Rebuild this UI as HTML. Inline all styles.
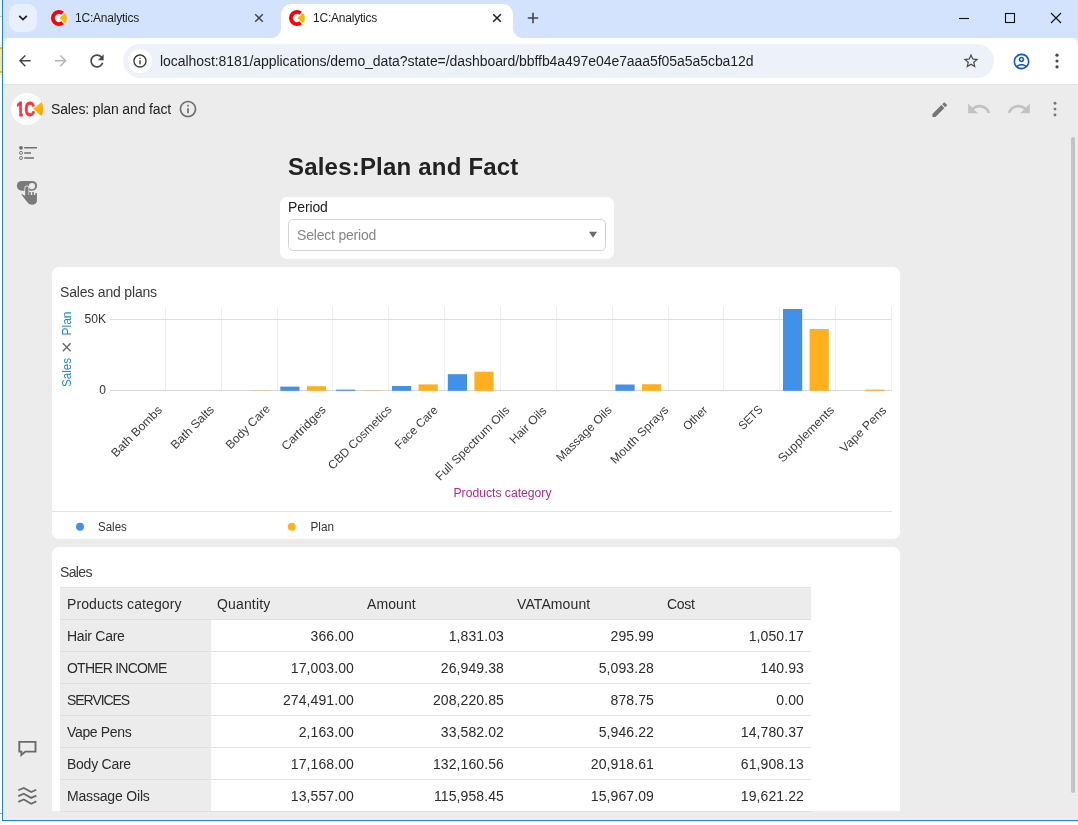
<!DOCTYPE html>
<html lang="en">
<head>
<meta charset="utf-8">
<title>1C:Analytics</title>
<style>
*{box-sizing:border-box;margin:0;padding:0}
html,body{width:1078px;height:825px;overflow:hidden;background:#fff}
body{position:relative;font-family:"Liberation Sans",sans-serif;color:#333;font-size:14px}
.abs{position:absolute}
svg{display:block;position:absolute;overflow:visible}
/* outer desktop strip */
#strip{left:0;top:0;width:2px;height:825px;background:#fff}
#strip i{position:absolute;left:0;width:2px;display:block}
/* window */
#win{left:2px;top:0;width:1076px;height:821px;background:#ececec;border-left:1px solid #1883d7;border-bottom:1px solid #1883d7;overflow:hidden}
#win .inner{position:absolute;left:-3px;top:0;width:1078px;height:825px;will-change:transform}
#cream-l{left:3px;top:85px;width:1px;height:735px;background:#f7f1ea}
#cream-b{left:3px;top:819px;width:1075px;height:1px;background:#f7f1ea}
/* tab strip */
#tabstrip{left:3px;top:0;width:1075px;height:38px;background:#d3e3fd}
#tabsearch{left:9px;top:4px;width:28px;height:28px;border-radius:9px;background:#e9f0fd}
.tabtitle{font-size:12px;color:#1f1f1f;top:11px;white-space:nowrap;line-height:14px;letter-spacing:-0.22px}
#activetab{left:281px;top:4px;width:232px;height:34px;background:#fff;border-radius:10px 10px 0 0}
#activetab:before,#activetab:after{content:"";position:absolute;bottom:0;width:10px;height:10px}
#activetab:before{left:-10px;background:radial-gradient(circle at 0 0,rgba(255,255,255,0) 9.5px,#fff 10.5px)}
#activetab:after{right:-10px;background:radial-gradient(circle at 100% 0,rgba(255,255,255,0) 9.5px,#fff 10.5px)}
/* toolbar */
#toolbar{left:3px;top:38px;width:1075px;height:46px;background:#fff;border-radius:8px 8px 0 0}
#toolbar-line{left:3px;top:84px;width:1075px;height:1px;background:#e3e3e3}
#omni{left:123px;top:44px;width:871px;height:34px;border-radius:17px;background:#edf2fa}
#omni-ic{left:128px;top:49px;width:24px;height:24px;border-radius:12px;background:#fff}
#url{left:160px;top:52px;font-size:14px;line-height:18px;color:#1f1f1f;white-space:nowrap;letter-spacing:-0.06px}
/* app */
#logo{left:11px;top:93px;width:32px;height:32px;border-radius:16px;background:#fff}
#apptitle{left:51px;top:100px;font-size:14px;line-height:18px;color:#222;white-space:nowrap;letter-spacing:-0.15px}
#h1{left:288px;top:151px;font-size:24px;line-height:32px;font-weight:bold;color:#222;white-space:nowrap;letter-spacing:0.2px}
.card{background:#fff;border-radius:7px}
#pcard{left:280px;top:197px;width:334px;height:62px}
#plabel{left:288px;top:198px;font-size:14px;line-height:18px;color:#222;letter-spacing:-0.12px}
#pselect{left:288px;top:219px;width:318px;height:32px;border:1px solid #d4d4d4;border-radius:5px;background:#fff}
#pph{left:297px;top:226px;font-size:14px;line-height:18px;color:#858585;letter-spacing:-0.2px;white-space:nowrap}
#ccard{left:52px;top:267px;width:848px;height:272px}
#tcard{left:52px;top:547px;width:848px;height:264px;border-radius:7px 7px 0 0}
.ctitle{font-size:14px;line-height:18px;color:#3a3a3a;white-space:nowrap;letter-spacing:-0.18px}
#thumb{left:1071px;top:137px;width:4px;height:656px;border-radius:2px;background:#c4c4c4}
/* table */
#tbl{left:60px;top:587px;width:751px;height:225px;border-top:1px solid #e2e2e2}
.row{position:absolute;left:0;width:751px;height:32px;border-bottom:1px solid #e0e0e0;background:#fff}
.row.h{background:#ececec}
.row b{position:absolute;left:0;top:0;width:151px;height:31px;background:#ececec;font-weight:normal}
.c{position:absolute;top:7px;font-size:14px;line-height:18px;color:#2b2b2b;white-space:nowrap;letter-spacing:-0.05px}
.n{text-align:right;width:143px;letter-spacing:0.1px}
</style>
</head>
<body>
<div id="strip" class="abs">
  <i style="top:0;height:16px;background:#f0f0f0"></i>
  <i style="top:16px;height:1px;background:#bdbdbd"></i>
  <i style="top:45px;height:1px;background:#e0e0e0"></i>
  <i style="top:47px;height:26px;background:#fde58a"></i>
  <i style="top:47px;height:2px;background:#f8c100"></i>
  <i style="top:71px;height:2px;background:#f8c100"></i>
  <i style="top:74px;height:1px;background:#e0e0e0"></i>
  <i style="top:813px;height:1px;background:#9a9a9a"></i>
</div>
<div id="win" class="abs"><div class="inner">
<div id="tabstrip" class="abs"></div>
<div id="tabsearch" class="abs"></div>
<svg style="left:17px;top:13px" width="12" height="10" viewBox="0 0 12 10"><path d="M2.2 2.8 L6 6.6 L9.8 2.8" fill="none" stroke="#1f1f1f" stroke-width="1.7"/></svg>
<!-- tab 1 (inactive) -->
<svg style="left:50.9px;top:9.9px" width="16" height="16" viewBox="0 0 16 16"><circle cx="8" cy="8" r="6.5" fill="#fff"/><path d="M13.03 1.78 A8 8 0 1 0 13.03 14.22 L10.35 11.36 A4.1 4.1 0 1 1 10.35 4.64 Z" fill="#f00"/><path d="M8.6 8 L14.04 2.75 A8 8 0 0 1 14.04 13.25 Z" fill="#ffb700"/></svg>
<div class="abs tabtitle" style="left:75px">1C:Analytics</div>
<svg style="left:254px;top:13px" width="10" height="10" viewBox="0 0 10 10"><path d="M1.2 1.2 L8.8 8.8 M8.8 1.2 L1.2 8.8" stroke="#444" stroke-width="1.5" fill="none"/></svg>
<!-- tab 2 (active) -->
<div id="activetab" class="abs"></div>
<svg style="left:288.9px;top:9.9px" width="16" height="16" viewBox="0 0 16 16"><circle cx="8" cy="8" r="6.5" fill="#fff"/><path d="M13.03 1.78 A8 8 0 1 0 13.03 14.22 L10.35 11.36 A4.1 4.1 0 1 1 10.35 4.64 Z" fill="#f00"/><path d="M8.6 8 L14.04 2.75 A8 8 0 0 1 14.04 13.25 Z" fill="#ffb700"/></svg>
<div class="abs tabtitle" style="left:313px">1C:Analytics</div>
<svg style="left:492px;top:13px" width="10" height="10" viewBox="0 0 10 10"><path d="M1.2 1.2 L8.8 8.8 M8.8 1.2 L1.2 8.8" stroke="#1f1f1f" stroke-width="1.5" fill="none"/></svg>
<svg style="left:527px;top:12px" width="12" height="12" viewBox="0 0 12 12"><path d="M6 0.8 V11.2 M0.8 6 H11.2" stroke="#444" stroke-width="1.6" fill="none"/></svg>
<!-- window controls -->
<svg style="left:958px;top:12px" width="12" height="12" viewBox="0 0 12 12"><path d="M1 6.5 H11" stroke="#111" stroke-width="1.1"/></svg>
<svg style="left:1004px;top:12px" width="12" height="12" viewBox="0 0 12 12"><rect x="1.5" y="1.5" width="9" height="9" fill="none" stroke="#111" stroke-width="1.1"/></svg>
<svg style="left:1050px;top:12px" width="12" height="12" viewBox="0 0 12 12"><path d="M1 1 L11 11 M11 1 L1 11" stroke="#111" stroke-width="1.1" fill="none"/></svg>
<!-- toolbar -->
<div id="toolbar" class="abs"></div>
<div id="toolbar-line" class="abs"></div>
<svg style="left:16.200px;top:52.200px" width="17.600" height="17.600" viewBox="0 0 24 24"><path d="M20 11H7.83l5.59-5.59L12 4l-8 8 8 8 1.41-1.41L7.83 13H20v-2z" fill="#474747"/></svg>
<svg style="left:52.200px;top:52.200px" width="17.600" height="17.600" viewBox="0 0 24 24"><path d="M12 4l-1.41 1.41L16.17 11H4v2h12.17l-5.58 5.59L12 20l8-8z" fill="#b4b4b4"/></svg>
<svg style="left:87px;top:51px" width="20" height="20" viewBox="0 0 24 24"><path d="M17.65 6.35C16.2 4.9 14.21 4 12 4c-4.42 0-7.99 3.58-7.99 8s3.57 8 7.99 8c3.73 0 6.84-2.55 7.73-6h-2.08c-.82 2.33-3.04 4-5.65 4-3.31 0-6-2.69-6-6s2.69-6 6-6c1.66 0 3.14.69 4.22 1.78L13 11h7V4l-2.35 2.35z" fill="#474747"/></svg>
<div id="omni" class="abs"></div>
<div id="omni-ic" class="abs"></div>
<svg style="left:132px;top:53px" width="16" height="16" viewBox="0 0 24 24"><path d="M11 7h2v2h-2zm0 4h2v6h-2zm1-9C6.48 2 2 6.48 2 12s4.480 10 10 10 10-4.480 10-10S17.520 2 12 2zm0 18c-4.410 0-8-3.590-8-8s3.590-8 8-8 8 3.590 8 8-3.590 8-8 8z" fill="#333"/></svg>
<div id="url" class="abs">localhost:8181/applications/demo_data?state=/dashboard/bbffb4a497e04e7aaa5f05a5a5cba12d</div>
<svg style="left:962px;top:52px" width="18" height="18" viewBox="0 0 24 24"><path d="M22 9.240l-7.190-.620L12 2 9.190 8.630 2 9.240l5.460 4.730L5.820 21 12 17.270 18.180 21l-1.630-7.030L22 9.240zM12 15.400l-3.760 2.270 1-4.280-3.320-2.880 4.380-.380L12 6.100l1.710 4.040 4.380.380-3.320 2.880 1 4.280L12 15.400z" fill="#474747"/></svg>
<svg style="left:1011.5px;top:51.5px" width="19" height="19" viewBox="0 0 24 24"><path d="M12 2C6.480 2 2 6.480 2 12s4.480 10 10 10 10-4.480 10-10S17.520 2 12 2zM7.350 18.500C8.660 17.560 10.260 17 12 17s3.340.560 4.650 1.500c-1.310.940-2.910 1.500-4.650 1.500s-3.340-.560-4.650-1.500zm10.790-1.380C16.450 15.800 14.320 15 12 15s-4.450.800-6.140 2.120C4.700 15.730 4 13.950 4 12c0-4.420 3.580-8 8-8s8 3.580 8 8c0 1.950-.700 3.730-1.860 5.120zM12 6c-1.930 0-3.500 1.570-3.500 3.500S10.070 13 12 13s3.500-1.570 3.500-3.500S13.930 6 12 6zm0 5c-.830 0-1.500-.670-1.500-1.500S11.170 8 12 8s1.500.670 1.500 1.500S12.830 11 12 11z" fill="#0b57d0"/></svg>
<svg style="left:1047px;top:51px" width="20" height="20" viewBox="0 0 24 24"><circle cx="12" cy="5" r="1.9" fill="#474747"/><circle cx="12" cy="12" r="1.9" fill="#474747"/><circle cx="12" cy="19" r="1.9" fill="#474747"/></svg>

<div id="cream-l" class="abs"></div>
<div id="cream-b" class="abs"></div>
<!-- app header -->
<div id="logo" class="abs"></div>
<svg style="left:11px;top:93px" width="32" height="32" viewBox="0 0 32 32">
  <defs><linearGradient id="lg" x1="0" y1="0" x2="1" y2="1"><stop offset="0" stop-color="#ffc800"/><stop offset="1" stop-color="#ffa000"/></linearGradient></defs>
  <text x="5.300" y="23.300" font-family="Liberation Sans, sans-serif" font-weight="bold" font-size="19.800" fill="#fa3239" stroke="#fa3239" stroke-width="0.800" textLength="18.600" lengthAdjust="spacingAndGlyphs">1C</text>
  <rect x="4" y="19.700" width="4.300" height="5.300" fill="#fff"/><rect x="11.800" y="19.700" width="2.200" height="5.300" fill="#fff"/>
  <path d="M22 15.900 L30.600 9.100 A16 16 0 0 1 30.600 22.900 Z" fill="url(#lg)"/>
</svg>
<div id="apptitle" class="abs">Sales: plan and fact</div>
<svg style="left:178px;top:99px" width="20" height="20" viewBox="0 0 24 24"><path d="M11 7h2v2h-2zm0 4h2v6h-2zm1-9C6.480 2 2 6.480 2 12s4.480 10 10 10 10-4.480 10-10S17.520 2 12 2zm0 18c-4.410 0-8-3.590-8-8s3.590-8 8-8 8 3.590 8 8-3.590 8-8 8z" fill="#6e6e6e"/></svg>
<svg style="left:929.500px;top:100.300px" width="19.400" height="19.400" viewBox="0 0 24 24"><path d="M3 17.250V21h3.750L17.810 9.940l-3.750-3.750L3 17.250zM20.710 7.040c.390-.390.390-1.020 0-1.410l-2.340-2.340c-.390-.390-1.020-.390-1.410 0l-1.830 1.830 3.750 3.750 1.830-1.830z" fill="#767676"/></svg>
<svg style="left:966px;top:96px" width="26" height="26" viewBox="0 0 24 24"><path d="M12.500 8c-2.650 0-5.050.990-6.900 2.600L2 7v9h9l-3.620-3.620c1.390-1.160 3.160-1.880 5.120-1.880 3.540 0 6.550 2.310 7.600 5.500l2.370-.780C21.080 11.030 17.150 8 12.500 8z" fill="#c2c2c2"/></svg>
<svg style="left:1006px;top:96px" width="26" height="26" viewBox="0 0 24 24"><path d="M18.400 10.600C16.550 8.990 14.150 8 11.500 8c-4.650 0-8.580 3.030-9.960 7.220L3.900 16c1.050-3.190 4.050-5.500 7.600-5.500 1.950 0 3.730.720 5.120 1.880L13 16h9V7l-3.600 3.600z" fill="#c2c2c2"/></svg>
<svg style="left:1045.300px;top:99.300px" width="20" height="20" viewBox="0 0 24 24"><circle cx="12" cy="5" r="1.750" fill="#767676"/><circle cx="12" cy="12.100" r="1.750" fill="#767676"/><circle cx="12" cy="19.200" r="1.750" fill="#767676"/></svg>
<!-- sidebar icons -->
<svg style="left:18px;top:144px" width="20" height="18" viewBox="0 0 20 18">
  <circle cx="3" cy="3.800" r="1.900" fill="#6e6e6e"/>
  <circle cx="3" cy="8.900" r="1.500" fill="none" stroke="#6e6e6e" stroke-width="0.9"/>
  <circle cx="3" cy="14" r="1.500" fill="none" stroke="#6e6e6e" stroke-width="0.9"/>
  <path d="M6.200 3.800 H19 M6.200 8.900 H13 M6.200 14 H16" stroke="#6e6e6e" stroke-width="1.5" fill="none"/>
</svg>
<svg style="left:12px;top:176px" width="30" height="34" viewBox="0 0 30 34">
  <rect x="4.900" y="4.900" width="20.200" height="9.900" rx="4.950" fill="#7a7a7a"/>
  <circle cx="20" cy="10.100" r="3.100" fill="#ececec"/>
  <rect x="12.400" y="9.500" width="4.900" height="9" rx="2.450" fill="#ececec"/>
  <rect x="13.200" y="10.300" width="3.300" height="11" rx="1.650" fill="#7a7a7a"/>
  <rect x="17.100" y="15.900" width="1.700" height="5" rx="0.500" fill="#7a7a7a"/>
  <rect x="20.200" y="15.900" width="1.700" height="5" rx="0.500" fill="#7a7a7a"/>
  <rect x="23.300" y="17.100" width="1.600" height="5" rx="0.500" fill="#7a7a7a"/>
  <path d="M9.900 17.900 L13.200 20.100 L13.200 19 L24.900 19 L24.900 24.700 Q24.600 28.700 19.800 28.700 Q17.400 28.700 15.900 27.100 L9.500 18.800 Q9.200 17.900 9.900 17.900 Z" fill="#7a7a7a"/>
</svg>
<svg style="left:18px;top:739px" width="20" height="20" viewBox="0 0 20 20"><path d="M1.300 2.900 H17.500 V12.600 H7.300 L3.400 15.900 V12.600 H1.300 Z" fill="none" stroke="#6a6a6a" stroke-width="1.900" stroke-linejoin="miter"/></svg>
<svg style="left:18px;top:786px" width="20" height="20" viewBox="0 0 20 20"><path d="M0.300 4.300 L5.800 1.900 L13.200 6.100 L18.300 3.800 M0.300 10.100 L5.800 7.700 L13.200 11.900 L18.300 9.600 M0.300 15.900 L5.800 13.500 L13.200 17.700 L18.300 15.400" fill="none" stroke="#6a6a6a" stroke-width="1.800"/></svg>
<!-- content -->
<div id="h1" class="abs">Sales:Plan and Fact</div>
<div id="pcard" class="abs card"></div>
<div id="plabel" class="abs">Period</div>
<div id="pselect" class="abs"></div>
<div id="pph" class="abs">Select period</div>
<svg style="left:588px;top:231px" width="10" height="8" viewBox="0 0 10 8"><path d="M1 0.800 H9 L5 6.800 Z" fill="#6a6a6a"/></svg>
<div id="ccard" class="abs card"></div>
<div id="tcard" class="abs card"></div>
<div id="thumb" class="abs"></div>

<div class="abs ctitle" style="left:60px;top:283px">Sales and plans</div>
<svg style="left:0;top:0" width="1078" height="825" viewBox="0 0 1078 825" font-family="Liberation Sans, sans-serif">
<path d="M165.5 307.0 V390.5" stroke="#eeeeee" stroke-width="1"/>
<path d="M221.5 307.0 V390.5" stroke="#eeeeee" stroke-width="1"/>
<path d="M277.5 307.0 V390.5" stroke="#eeeeee" stroke-width="1"/>
<path d="M332.5 307.0 V390.5" stroke="#eeeeee" stroke-width="1"/>
<path d="M388.5 307.0 V390.5" stroke="#eeeeee" stroke-width="1"/>
<path d="M444.5 307.0 V390.5" stroke="#eeeeee" stroke-width="1"/>
<path d="M500.5 307.0 V390.5" stroke="#eeeeee" stroke-width="1"/>
<path d="M556.5 307.0 V390.5" stroke="#eeeeee" stroke-width="1"/>
<path d="M612.5 307.0 V390.5" stroke="#eeeeee" stroke-width="1"/>
<path d="M668.5 307.0 V390.5" stroke="#eeeeee" stroke-width="1"/>
<path d="M723.5 307.0 V390.5" stroke="#eeeeee" stroke-width="1"/>
<path d="M779.5 307.0 V390.5" stroke="#eeeeee" stroke-width="1"/>
<path d="M835.5 307.0 V390.5" stroke="#eeeeee" stroke-width="1"/>
<path d="M891.5 307.0 V390.5" stroke="#eeeeee" stroke-width="1"/>
<path d="M110 319.5 H892" stroke="#dedede" stroke-width="1"/>
<path d="M110 390.5 H892" stroke="#d6d6d6" stroke-width="1"/>
<rect x="251.0" y="390.0" width="19.2" height="0.8" fill="#ffb01f" opacity="0.3"/>
<rect x="280.3" y="386.6" width="19.2" height="4.2" fill="#4191e8"/>
<rect x="306.9" y="386.2" width="19.2" height="4.6" fill="#ffb01f"/>
<rect x="336.1" y="389.6" width="19.2" height="1.2" fill="#4191e8"/>
<rect x="362.7" y="390.0" width="19.2" height="0.8" fill="#ffb01f" opacity="0.3"/>
<rect x="392.0" y="386.0" width="19.2" height="4.8" fill="#4191e8"/>
<rect x="418.6" y="384.4" width="19.2" height="6.4" fill="#ffb01f"/>
<rect x="447.8" y="374.2" width="19.2" height="16.6" fill="#4191e8"/>
<rect x="474.4" y="371.7" width="19.2" height="19.1" fill="#ffb01f"/>
<rect x="615.4" y="384.5" width="19.2" height="6.3" fill="#4191e8"/>
<rect x="642.0" y="384.2" width="19.2" height="6.6" fill="#ffb01f"/>
<rect x="783.0" y="309.0" width="19.2" height="81.8" fill="#4191e8"/>
<rect x="809.6" y="329.0" width="19.2" height="61.8" fill="#ffb01f"/>
<rect x="865.4" y="389.6" width="19.2" height="1.2" fill="#ffb01f"/>
<text x="106" y="323" font-size="12" fill="#333" text-anchor="end" textLength="21.5" lengthAdjust="spacingAndGlyphs">50K</text>
<text x="106" y="394" font-size="12" fill="#333" text-anchor="end">0</text>
<text transform="translate(71,387) rotate(-90)" font-size="12" fill="#1e88d6" textLength="29" lengthAdjust="spacingAndGlyphs">Sales</text>
<text x="66.700" y="353.500" font-size="19.600" fill="#6b6b6b" text-anchor="middle">×</text>
<text transform="translate(71,335.500) rotate(-90)" font-size="12" fill="#1e88d6" textLength="24" lengthAdjust="spacingAndGlyphs">Plan</text>
<text transform="translate(115.90,457.70) rotate(-45)" font-size="12" fill="#3d3d3d" textLength="66.35" lengthAdjust="spacingAndGlyphs">Bath Bombs</text>
<text transform="translate(175.46,449.70) rotate(-45)" font-size="12" fill="#3d3d3d" textLength="55.58" lengthAdjust="spacingAndGlyphs">Bath Salts</text>
<text transform="translate(230.46,449.70) rotate(-45)" font-size="12" fill="#3d3d3d" textLength="57.00" lengthAdjust="spacingAndGlyphs">Body Care</text>
<text transform="translate(286.14,450.90) rotate(-45)" font-size="12" fill="#3d3d3d" textLength="57.31" lengthAdjust="spacingAndGlyphs">Cartridges</text>
<text transform="translate(332.78,470.18) rotate(-45)" font-size="12" fill="#3d3d3d" textLength="84.61" lengthAdjust="spacingAndGlyphs">CBD Cosmetics</text>
<text transform="translate(399.62,449.70) rotate(-45)" font-size="12" fill="#3d3d3d" textLength="55.02" lengthAdjust="spacingAndGlyphs">Face Care</text>
<text transform="translate(440.18,481.14) rotate(-45)" font-size="12" fill="#3d3d3d" textLength="99.12" lengthAdjust="spacingAndGlyphs">Full Spectrum Oils</text>
<text transform="translate(514.26,444.50) rotate(-45)" font-size="12" fill="#3d3d3d" textLength="46.77" lengthAdjust="spacingAndGlyphs">Hair Oils</text>
<text transform="translate(560.90,462.34) rotate(-45)" font-size="12" fill="#3d3d3d" textLength="72.94" lengthAdjust="spacingAndGlyphs">Massage Oils</text>
<text transform="translate(615.34,464.50) rotate(-45)" font-size="12" fill="#3d3d3d" textLength="76.16" lengthAdjust="spacingAndGlyphs">Mouth Sprays</text>
<text transform="translate(687.78,431.10) rotate(-45)" font-size="12" fill="#3d3d3d" textLength="28.79" lengthAdjust="spacingAndGlyphs">Other</text>
<text transform="translate(743.30,430.50) rotate(-45)" font-size="12" fill="#3d3d3d" textLength="28.59" lengthAdjust="spacingAndGlyphs">SETS</text>
<text transform="translate(782.86,462.94) rotate(-45)" font-size="12" fill="#3d3d3d" textLength="73.71" lengthAdjust="spacingAndGlyphs">Supplements</text>
<text transform="translate(844.86,453.30) rotate(-45)" font-size="12" fill="#3d3d3d" textLength="59.69" lengthAdjust="spacingAndGlyphs">Vape Pens</text>
<text x="453.500" y="497" font-size="12" fill="#b02a8f" textLength="98" lengthAdjust="spacingAndGlyphs">Products category</text>
<path d="M52 511.500 H892" stroke="#e2e2e2" stroke-width="1"/>
<circle cx="80" cy="526.800" r="4" fill="#4191e8"/>
<text x="98" y="531" font-size="12" fill="#333" textLength="28.800" lengthAdjust="spacingAndGlyphs">Sales</text>
<circle cx="291.800" cy="526.800" r="4" fill="#ffb01f"/>
<text x="310.500" y="531" font-size="12" fill="#333" textLength="23.500" lengthAdjust="spacingAndGlyphs">Plan</text>
</svg>
<div class="abs ctitle" style="left:60px;top:563px;letter-spacing:-0.65px">Sales</div>
<div id="tbl" class="abs">
<div class="row h" style="top:0"><span class="c" style="left:7px;letter-spacing:0.10px">Products category</span><span class="c" style="left:157px;letter-spacing:0.15px">Quantity</span><span class="c" style="left:307px;letter-spacing:0.10px">Amount</span><span class="c" style="left:457px;letter-spacing:0.10px">VATAmount</span><span class="c" style="left:607px;letter-spacing:-0.30px">Cost</span></div>
<div class="row" style="top:32px"><b></b><span class="c" style="left:7px;letter-spacing:-0.25px">Hair Care</span><span class="c n" style="left:151px">366.00</span><span class="c n" style="left:301px">1,831.03</span><span class="c n" style="left:451px">295.99</span><span class="c n" style="left:601px">1,050.17</span></div>
<div class="row" style="top:64px"><b></b><span class="c" style="left:7px;letter-spacing:-0.78px">OTHER INCOME</span><span class="c n" style="left:151px">17,003.00</span><span class="c n" style="left:301px">26,949.38</span><span class="c n" style="left:451px">5,093.28</span><span class="c n" style="left:601px">140.93</span></div>
<div class="row" style="top:96px"><b></b><span class="c" style="left:7px;letter-spacing:-1.05px">SERVICES</span><span class="c n" style="left:151px">274,491.00</span><span class="c n" style="left:301px">208,220.85</span><span class="c n" style="left:451px">878.75</span><span class="c n" style="left:601px">0.00</span></div>
<div class="row" style="top:128px"><b></b><span class="c" style="left:7px;letter-spacing:-0.35px">Vape Pens</span><span class="c n" style="left:151px">2,163.00</span><span class="c n" style="left:301px">33,582.02</span><span class="c n" style="left:451px">5,946.22</span><span class="c n" style="left:601px">14,780.37</span></div>
<div class="row" style="top:160px"><b></b><span class="c" style="left:7px;letter-spacing:-0.25px">Body Care</span><span class="c n" style="left:151px">17,168.00</span><span class="c n" style="left:301px">132,160.56</span><span class="c n" style="left:451px">20,918.61</span><span class="c n" style="left:601px">61,908.13</span></div>
<div class="row" style="top:192px"><b></b><span class="c" style="left:7px;letter-spacing:-0.18px">Massage Oils</span><span class="c n" style="left:151px">13,557.00</span><span class="c n" style="left:301px">115,958.45</span><span class="c n" style="left:451px">15,967.09</span><span class="c n" style="left:601px">19,621.22</span></div>
</div>
</div></div>
</body>
</html>
